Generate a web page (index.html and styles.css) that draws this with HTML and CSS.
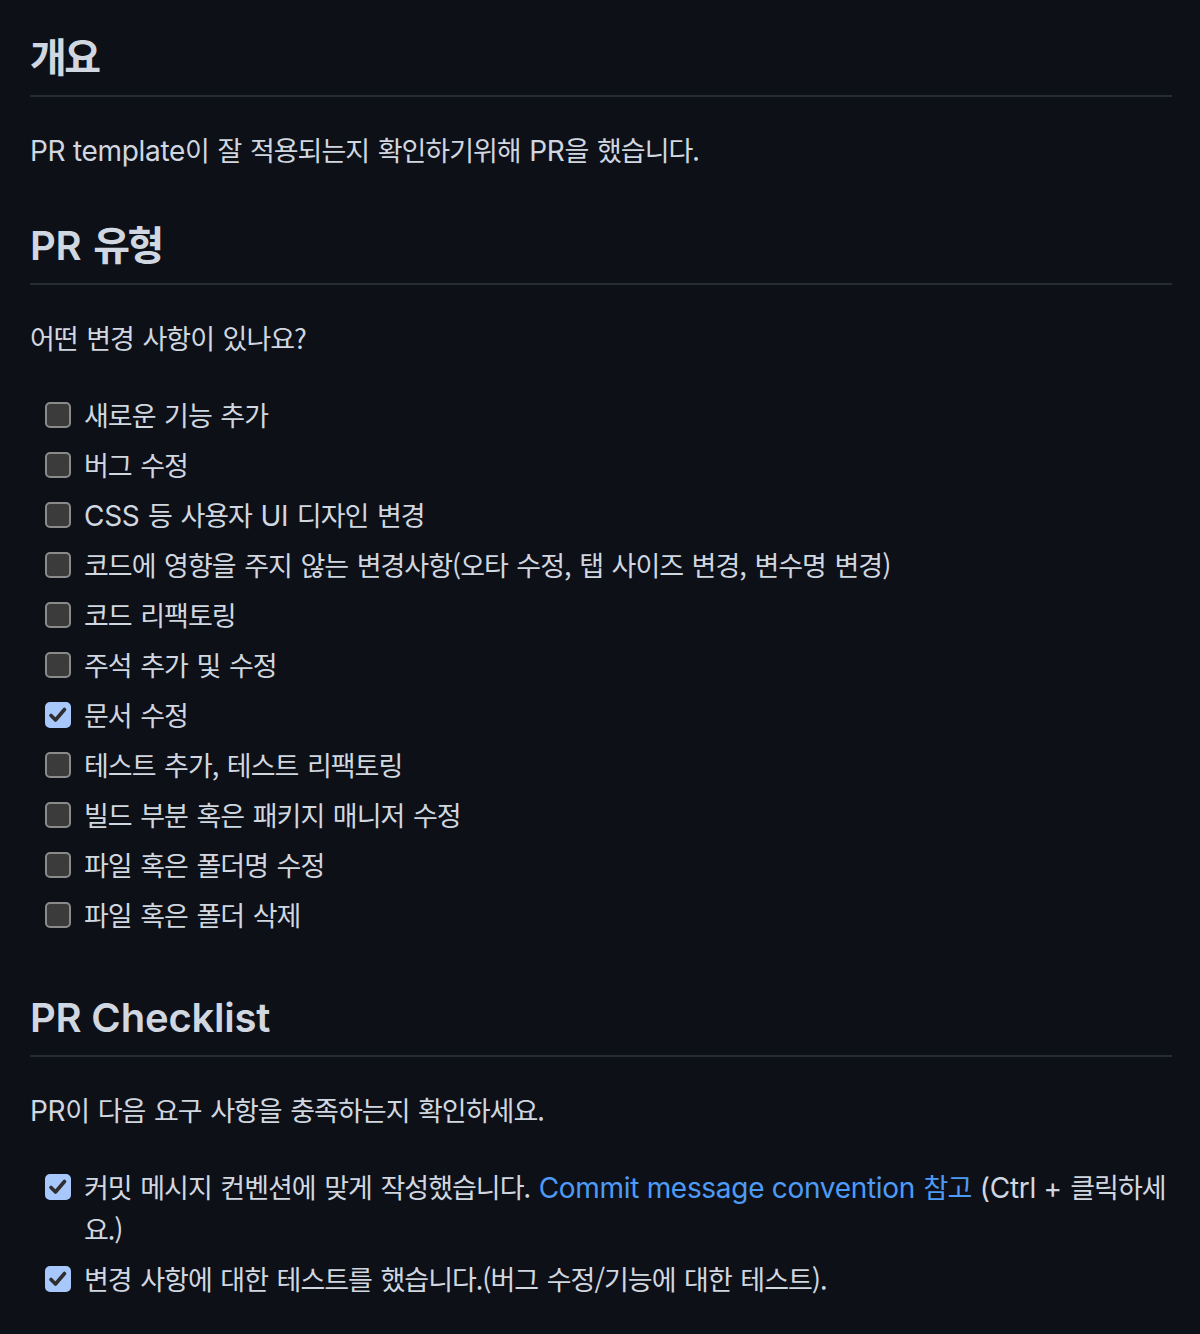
FILE: index.html
```html
<!DOCTYPE html>
<html lang="ko">
<head>
<meta charset="utf-8">
<title>PR template</title>
<link rel="stylesheet" href="styles.css">
</head>
<body>
<article class="markdown">
  <h2>개요</h2>
  <p><span class="en">PR template</span>이 잘 적용되는지 확인하기위해 <span class="en">PR</span>을 했습니다.</p>

  <h2><span class="en">PR</span> 유형</h2>
  <p>어떤 변경 사항이 있나요?</p>
  <ul class="tasks">
    <li><span class="cb"></span><span class="label">새로운 기능 추가</span></li>
    <li><span class="cb"></span><span class="label">버그 수정</span></li>
    <li><span class="cb"></span><span class="label"><span class="en">CSS</span> 등 사용자 <span class="en">UI</span> 디자인 변경</span></li>
    <li><span class="cb"></span><span class="label">코드에 영향을 주지 않는 변경사항(오타 수정, 탭 사이즈 변경, 변수명 변경)</span></li>
    <li><span class="cb"></span><span class="label">코드 리팩토링</span></li>
    <li><span class="cb"></span><span class="label">주석 추가 및 수정</span></li>
    <li><span class="cb on"><svg viewBox="0 0 22 22" aria-hidden="true"><polyline points="4,11.5 8.5,16 17.5,5.5"/></svg></span><span class="label">문서 수정</span></li>
    <li><span class="cb"></span><span class="label">테스트 추가, 테스트 리팩토링</span></li>
    <li><span class="cb"></span><span class="label">빌드 부분 혹은 패키지 매니저 수정</span></li>
    <li><span class="cb"></span><span class="label">파일 혹은 폴더명 수정</span></li>
    <li><span class="cb"></span><span class="label">파일 혹은 폴더 삭제</span></li>
  </ul>

  <h2><span class="en">PR Checklist</span></h2>
  <p><span class="en">PR</span>이 다음 요구 사항을 충족하는지 확인하세요.</p>
  <ul class="tasks">
    <li><span class="cb on"><svg viewBox="0 0 22 22" aria-hidden="true"><polyline points="4,11.5 8.5,16 17.5,5.5"/></svg></span><span class="label">커밋 메시지 컨벤션에 맞게 작성했습니다. <a class="link" href="#"><span class="en">Commit message convention</span> 참고</a> <span class="en">(Ctrl +</span> 클릭하세요.)</span></li>
    <li><span class="cb on"><svg viewBox="0 0 22 22" aria-hidden="true"><polyline points="4,11.5 8.5,16 17.5,5.5"/></svg></span><span class="label">변경 사항에 대한 테스트를 했습니다.(버그 수정/기능에 대한 테스트).</span></li>
  </ul>
</article>
</body>
</html>
```

FILE: styles.css
```css
* {
  box-sizing: border-box;
}

html,
body {
  margin: 0;
  background: #0d1117;
}

body {
  color: #d1d7e0;
  font-family: "Noto Sans CJK KR", "Noto Sans", sans-serif;
  font-size: 27px;
  line-height: 42px;
  letter-spacing: -1px;
  word-spacing: 2px;
}

.markdown {
  padding: 28px 28px 40px 30px;
}

.en {
  font-family: Inter, "Noto Sans CJK KR", sans-serif;
  font-size: 28px;
  line-height: 1;
  letter-spacing: -0.3px;
  word-spacing: 0;
}

h2 {
  margin: 45px 0 32px;
  padding-bottom: 13px;
  border-bottom: 2px solid #262c33;
  font-size: 40px;
  line-height: 54px;
  font-weight: 700;
  letter-spacing: -2.5px;
  word-spacing: 3px;
}

h2:first-child {
  margin-top: 0;
}

h2 .en {
  font-size: 40px;
  font-weight: 600;
  letter-spacing: -0.2px;
}

p {
  margin: 0 0 35px;
}

.tasks {
  list-style: none;
  margin: 0 0 52px;
  padding: 0 0 0 15px;
}

.tasks li {
  display: flex;
  align-items: flex-start;
  gap: 13px;
}

.tasks li + li {
  margin-top: 8px;
}

.cb {
  flex: none;
  display: block;
  width: 26px;
  height: 26px;
  margin-top: 8px;
  border: 2px solid #8a8a8a;
  border-radius: 5px;
  background: #3b3b3b;
}

.cb.on {
  background: #a8c7fa;
  border-color: #a8c7fa;
}

.cb svg {
  display: block;
  width: 22px;
  height: 22px;
}

.cb polyline {
  fill: none;
  stroke: #2e2e2e;
  stroke-width: 3.6;
  stroke-linecap: round;
  stroke-linejoin: round;
}

.label {
  min-width: 0;
}

.link {
  color: #4d9bf7;
  text-decoration: none;
}
```
